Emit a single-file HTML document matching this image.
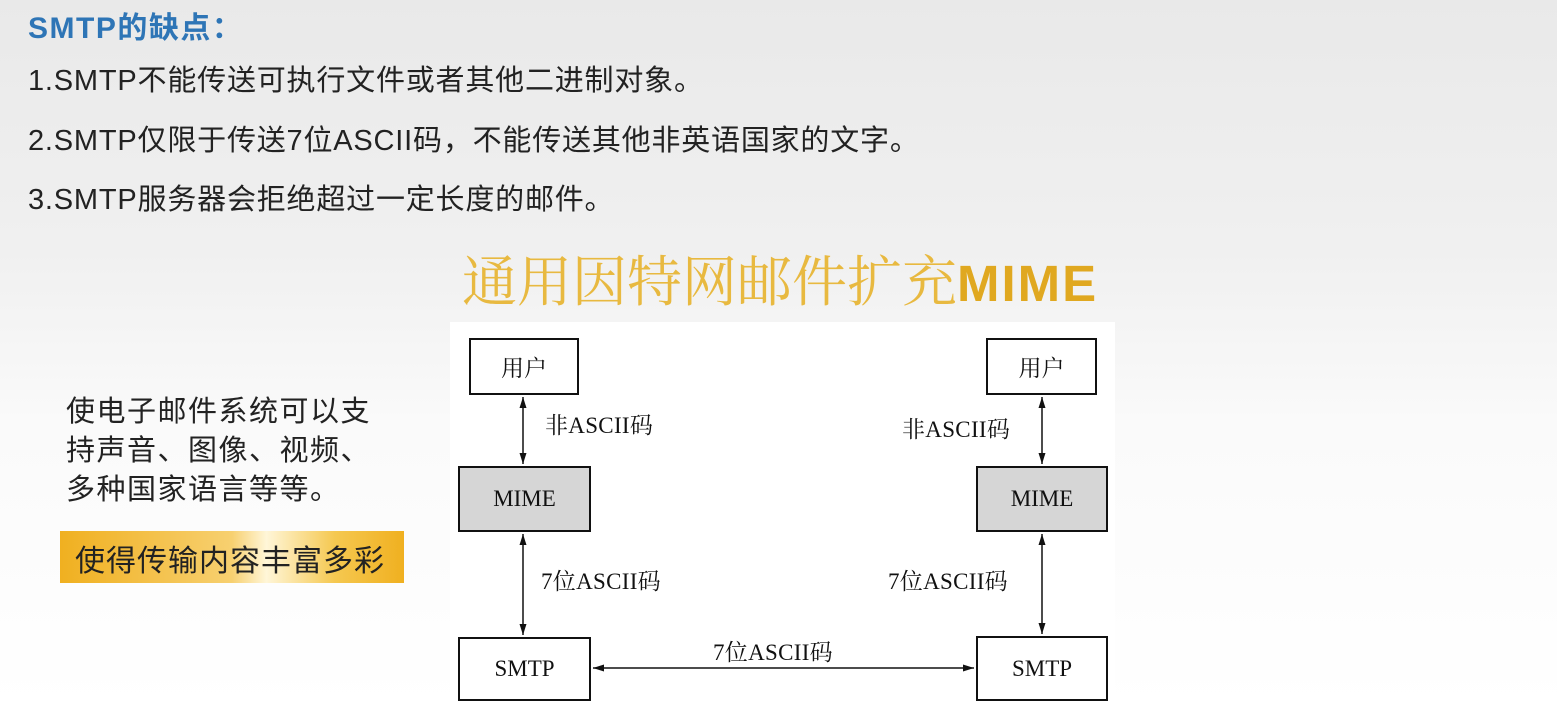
<!DOCTYPE html>
<html><head><meta charset="utf-8"><style>
*{margin:0;padding:0;box-sizing:border-box}
body{width:1557px;height:708px;overflow:hidden;position:relative;background:linear-gradient(180deg,#e9e9e9 0%,#f0f0f0 35%,#fafafa 60%,#fff 100%);font-family:"Liberation Sans","Noto Sans CJK SC",sans-serif}
.t{position:absolute;white-space:nowrap}
.l{font-size:29px;color:#222;letter-spacing:0.8px}
.box{position:absolute;border:2px solid #111;font-family:"Liberation Serif","Noto Serif CJK SC",serif;font-size:23px;display:flex;align-items:center;justify-content:center;color:#111}
.g{background:#d6d6d6}
.w{background:#fff}
.lab{position:absolute;font-family:"Liberation Serif","Noto Serif CJK SC",serif;font-size:23px;letter-spacing:0.3px;color:#111;white-space:nowrap}
</style></head><body>
<div class="t" style="left:28px;top:3px;font-size:30px;font-weight:bold;color:#2e75b6;letter-spacing:1.5px">SMTP的缺点：</div>
<div class="t l" style="left:28px;top:57px">1.SMTP不能传送可执行文件或者其他二进制对象。</div>
<div class="t l" style="left:28px;top:117px">2.SMTP仅限于传送7位ASCII码，不能传送其他非英语国家的文字。</div>
<div class="t l" style="left:28px;top:176px">3.SMTP服务器会拒绝超过一定长度的邮件。</div>
<div class="t" style="left:462px;top:238px;font-size:55px;color:#e8b940;font-family:'Liberation Serif','Noto Serif CJK SC',serif">通用因特网邮件扩充<span style="font-family:'Liberation Sans',sans-serif;font-weight:bold;font-size:51px;color:#e0a820;letter-spacing:2px">MIME</span></div>
<div class="t" style="left:66px;top:393px;font-size:29px;line-height:39px;color:#222;letter-spacing:1.5px">使电子邮件系统可以支<br>持声音、图像、视频、<br>多种国家语言等等。</div>
<div style="position:absolute;left:60px;top:531px;width:344px;height:52px;background:linear-gradient(90deg,#f0b020 0%,#f7d070 50%,#fff6d8 60%,#f5c850 80%,#f0b020 100%)"></div>
<div class="t" style="left:75px;top:536px;font-size:30px;color:#222;letter-spacing:1px">使得传输内容丰富多彩</div>
<div style="position:absolute;left:450px;top:322px;width:665px;height:386px;background:#fff"></div>
<div class="box w" style="left:469px;top:338px;width:110px;height:57px">用户</div>
<div class="box g" style="left:458px;top:466px;width:133px;height:66px">MIME</div>
<div class="box w" style="left:458px;top:637px;width:133px;height:64px">SMTP</div>
<div class="box w" style="left:986px;top:338px;width:111px;height:57px">用户</div>
<div class="box g" style="left:976px;top:466px;width:132px;height:66px">MIME</div>
<div class="box w" style="left:976px;top:636px;width:132px;height:65px">SMTP</div>
<svg style="position:absolute;left:0;top:0" width="1557" height="708">
<defs><marker id="a" markerWidth="12" markerHeight="10" refX="11" refY="3.5" orient="auto-start-reverse" markerUnits="userSpaceOnUse"><path d="M0,0L11,3.5L0,7z" fill="#111"/></marker></defs>
<g stroke="#111" stroke-width="1.5" fill="none">
<line x1="523" y1="397" x2="523" y2="464" marker-start="url(#a)" marker-end="url(#a)"/>
<line x1="523" y1="534" x2="523" y2="635" marker-start="url(#a)" marker-end="url(#a)"/>
<line x1="1042" y1="397" x2="1042" y2="464" marker-start="url(#a)" marker-end="url(#a)"/>
<line x1="1042" y1="534" x2="1042" y2="634" marker-start="url(#a)" marker-end="url(#a)"/>
<line x1="593" y1="668" x2="974" y2="668" marker-start="url(#a)" marker-end="url(#a)"/>
</g></svg>
<div class="lab" style="left:545px;top:407px">非ASCII码</div>
<div class="lab" style="left:902px;top:411px">非ASCII码</div>
<div class="lab" style="left:541px;top:563px">7位ASCII码</div>
<div class="lab" style="left:888px;top:563px">7位ASCII码</div>
<div class="lab" style="left:713px;top:634px">7位ASCII码</div>
</body></html>
